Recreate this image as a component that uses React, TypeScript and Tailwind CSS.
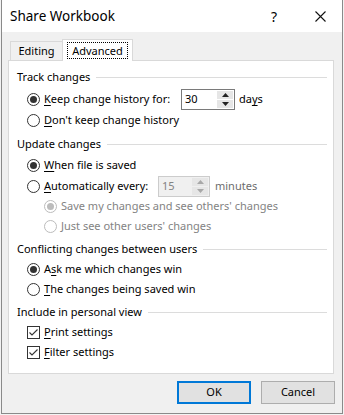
import React from 'react';

const font = { fontFamily: '"Noto Sans", "Open Sans", sans-serif' };

const Radio = ({ checked, disabled }: { checked?: boolean; disabled?: boolean }) => (
  <span
    className={`flex h-[13px] w-[13px] shrink-0 items-center justify-center rounded-full border bg-white ${
      disabled ? 'border-[#bcbcbc]' : 'border-[#333333]'
    }`}
  >
    {checked && (
      <span className={`h-[7px] w-[7px] rounded-full ${disabled ? 'bg-[#bcbcbc]' : 'bg-[#333333]'}`} />
    )}
  </span>
);

const Checkbox = () => (
  <span className="flex h-[13px] w-[13px] shrink-0 items-center justify-center border border-[#333333] bg-white">
    <svg width="11" height="11" viewBox="0 0 11 11">
      <polyline points="1.5,5.5 4,8 9.5,2.5" fill="none" stroke="#333" strokeWidth="1.1" />
    </svg>
  </span>
);

const Heading = ({ children, className = '' }: { children: React.ReactNode; className?: string }) => (
  <div className={`flex h-[20px] items-center pl-[8px] pr-[6px] ${className}`}>
    <span className="whitespace-nowrap">{children}</span>
    <span className="ml-[6px] h-px flex-1 bg-[#dcdcdc]" />
  </div>
);

const Spin = ({ value, disabled }: { value: string; disabled?: boolean }) => (
  <div
    className={`flex h-[21px] shrink-0 items-center border ${
      disabled ? 'w-[52px] border-[#cccccc] bg-[#f0f0f0] text-[#838383]' : 'w-[54px] border-[#7a7a7a] bg-white'
    }`}
  >
    <span className="flex-1 pl-[3px]">{value}</span>
    <div className="mr-[1px] flex h-[17px] w-[16px] flex-col gap-px">
      {[0, 1].map((i) => (
        <div key={i} className="flex flex-1 items-center justify-center bg-[#e6e6e6]">
          <svg width="7" height="4" viewBox="0 0 7 4">
            <polygon
              points={i === 0 ? '0,4 3.5,0 7,4' : '0,0 3.5,4 7,0'}
              fill={disabled ? '#a8a8a8' : '#222'}
            />
          </svg>
        </div>
      ))}
    </div>
  </div>
);

const Key = ({ children }: { children: React.ReactNode }) => (
  <span className="underline decoration-1 underline-offset-[2px]">{children}</span>
);

export default function App() {
  return (
    <div className="h-[415px] w-[344px] whitespace-nowrap bg-[#f3f3f3] pl-px text-[11px] text-black" style={font}>
      <div className="flex h-[414px] w-[342px] flex-col border-x border-b border-[#8a8a8a]">
        {/* Title bar */}
        <div className="flex h-[32px] items-center bg-white pl-[8px]">
          <span className="text-[13.5px]">Share Workbook</span>
          <span className="ml-auto text-[14px]">?</span>
          <svg className="ml-[38px] mr-[16px]" width="11" height="11" viewBox="0 0 11 11">
            <path d="M0.5 0.5 L10.5 10.5 M10.5 0.5 L0.5 10.5" stroke="#111" strokeWidth="1.1" />
          </svg>
        </div>

        <div className="flex flex-1 flex-col bg-[#f0f0f0] pt-[7px]">
          {/* Tabs */}
          <div className="ml-[6px] flex items-end pl-[2px]">
            <div className="flex h-[19px] w-[52px] items-center justify-center border-l border-t border-[#d9d9d9]">
              Editing
            </div>
            <div className="relative z-10 -mb-px flex h-[22px] w-[71px] items-center justify-center border-x border-t border-[#d9d9d9] bg-white">
              <span className="border border-dotted border-black px-[4px] leading-[15px]">Advanced</span>
            </div>
          </div>

          {/* Panel */}
          <div className="ml-[6px] mr-[8px] h-[314px] border border-[#d9d9d9] bg-white pt-[6px]">
            <Heading>Track changes</Heading>
            <div className="mt-[2px] flex h-[21px] items-center pl-[18px]">
              <Radio checked />
              <span className="ml-[4px] w-[137px]">
                <Key>K</Key>eep change history for:
              </span>
              <Spin value="30" />
              <span className="ml-[4px]">
                da<Key>y</Key>s
              </span>
            </div>
            <div className="flex h-[20px] items-center pl-[18px]">
              <Radio />
              <span className="ml-[4px]">
                <Key>D</Key>on't keep change history
              </span>
            </div>

            <Heading className="mt-[4px]">Update changes</Heading>
            <div className="mt-[1px] flex h-[20px] items-center pl-[18px]">
              <Radio checked />
              <span className="ml-[4px]">
                <Key>W</Key>hen file is saved
              </span>
            </div>
            <div className="mt-[1px] flex h-[21px] items-center pl-[18px]">
              <Radio />
              <span className="ml-[4px] w-[114px]">
                <Key>A</Key>utomatically every:
              </span>
              <Spin value="15" disabled />
              <span className="ml-[5px] text-[#6d6d6d]">minutes</span>
            </div>
            <div className="flex h-[19px] items-center pl-[35px] text-[#838383]">
              <Radio checked disabled />
              <span className="ml-[4px]">Save my changes and see others' changes</span>
            </div>
            <div className="flex h-[20px] items-center pl-[35px] text-[#838383]">
              <Radio disabled />
              <span className="ml-[4px]">Just see other users' changes</span>
            </div>

            <Heading className="mt-[3px]">Conflicting changes between users</Heading>
            <div className="mt-[1px] flex h-[19px] items-center pl-[18px]">
              <Radio checked />
              <span className="ml-[4px]">
                A<Key>s</Key>k me which changes win
              </span>
            </div>
            <div className="flex h-[20px] items-center pl-[18px]">
              <Radio />
              <span className="ml-[4px]">
                <Key>T</Key>he changes being saved win
              </span>
            </div>

            <Heading className="mt-[3px]">Include in personal view</Heading>
            <div className="mt-[1px] flex h-[19px] items-center pl-[18px]">
              <Checkbox />
              <span className="ml-[4px]">
                <Key>P</Key>rint settings
              </span>
            </div>
            <div className="flex h-[20px] items-center pl-[18px]">
              <Checkbox />
              <span className="ml-[4px]">
                <Key>F</Key>ilter settings
              </span>
            </div>
          </div>

          {/* Buttons */}
          <div className="mt-[7px] flex justify-end gap-[10px] pr-[7px]">
            <button className="h-[23px] w-[74px] border-2 border-[#0078d7] bg-[#e1e1e1]">OK</button>
            <button className="h-[23px] w-[74px] border border-[#adadad] bg-[#e1e1e1]">Cancel</button>
          </div>
        </div>
      </div>
    </div>
  );
}
